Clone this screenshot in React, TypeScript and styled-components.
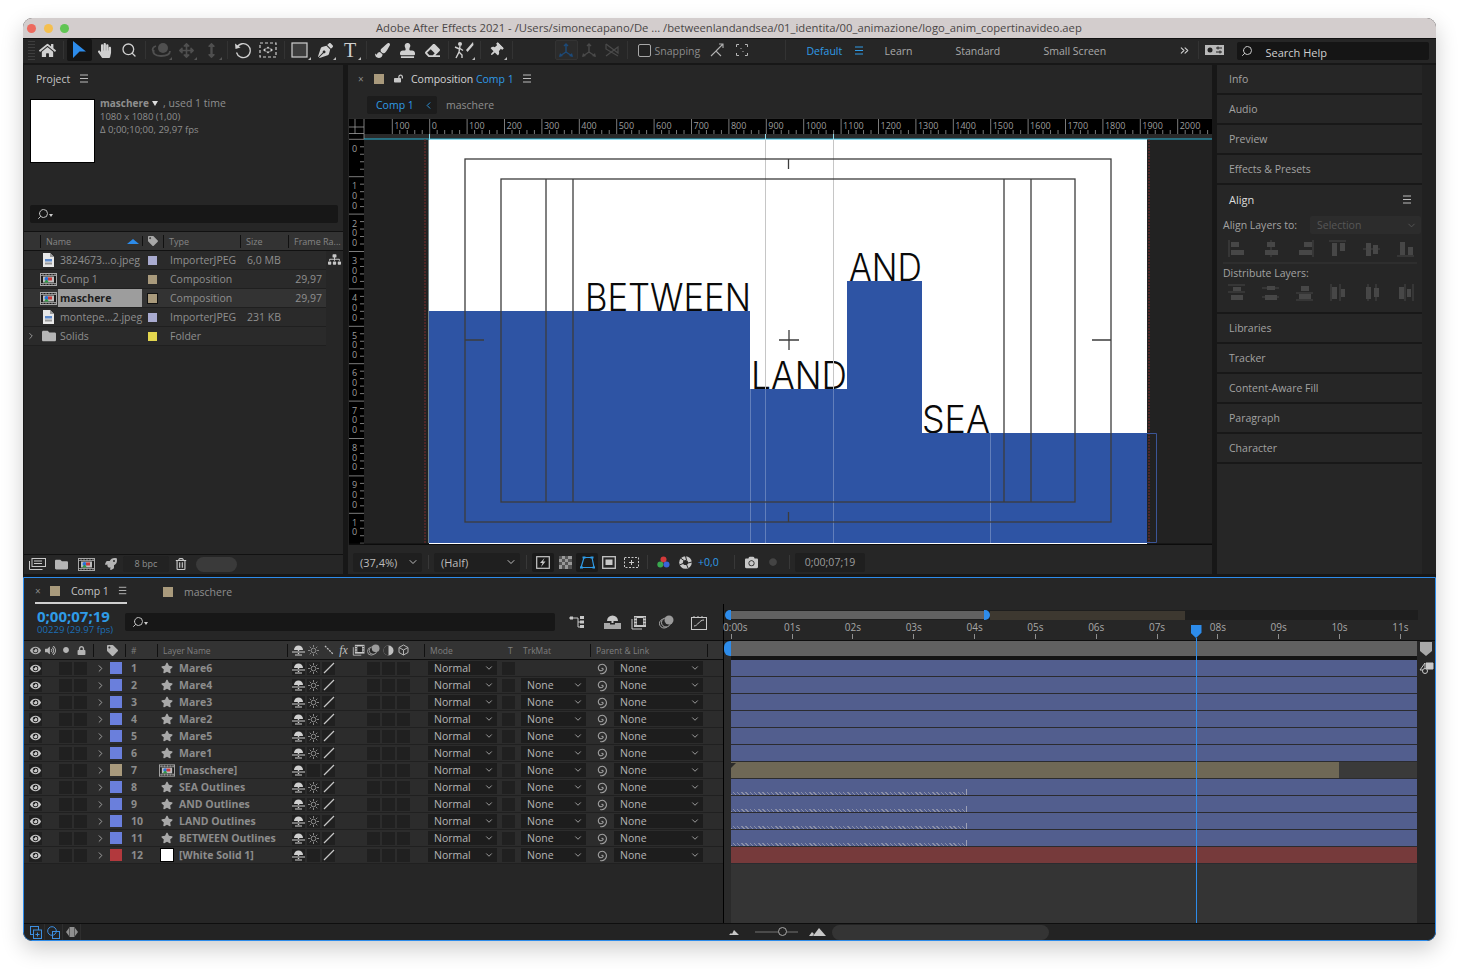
import styled, { createGlobalStyle } from "styled-components";
import { ChevronDown, ChevronRight, ChevronLeft, Search, ChevronsRight } from "lucide-react";
import {
    FaHome, FaHandPaper, FaArrowsAlt, FaPenNib, FaPaintBrush, FaStamp, FaEraser, FaThumbtack,
    FaStar, FaCamera, FaEye, FaLock, FaLockOpen, FaTag, FaVolumeUp, FaFolder, FaSitemap,
    FaRocket, FaRegTrashAlt, FaArrowsAltV, FaCircle,
} from "react-icons/fa";

const FONT = `"Open Sans", "Noto Sans", sans-serif`;

const GlobalStyle = createGlobalStyle`
    html, body { margin: 0; padding: 0; background: #fff; height: 969px; overflow: hidden; }
    * { box-sizing: border-box; }
    #root { font-family: ${FONT}; }
`;

const PROJECT_ROWS = [
    { icon: "file", name: "3824673...o.jpeg", swatch: "#a9abd0", type: "ImporterJPEG", size: "6,0 MB", fps: "" },
    { icon: "comp", name: "Comp 1", swatch: "#a99a7c", type: "Composition", size: "", fps: "29,97" },
    { icon: "comp", name: "maschere", swatch: "#a99a7c", type: "Composition", size: "", fps: "29,97", selected: true },
    { icon: "file", name: "montepe...2.jpeg", swatch: "#a9abd0", type: "ImporterJPEG", size: "231 KB", fps: "" },
    { icon: "folder", name: "Solids", swatch: "#e3d64e", type: "Folder", size: "", fps: "", expand: true },
];

const BLUE = "#6a7fdc";
const TAN = "#a99a7c";
const LAYERS = [
    { n: 1, name: "Mare6", swatch: BLUE, kind: "star", matte: false, hatch: false },
    { n: 2, name: "Mare4", swatch: BLUE, kind: "star", matte: true, hatch: false },
    { n: 3, name: "Mare3", swatch: BLUE, kind: "star", matte: true, hatch: false },
    { n: 4, name: "Mare2", swatch: BLUE, kind: "star", matte: true, hatch: false },
    { n: 5, name: "Mare5", swatch: BLUE, kind: "star", matte: true, hatch: false },
    { n: 6, name: "Mare1", swatch: BLUE, kind: "star", matte: true, hatch: false },
    { n: 7, name: "[maschere]", swatch: TAN, kind: "comp", matte: true, hatch: false },
    { n: 8, name: "SEA Outlines", swatch: BLUE, kind: "star", matte: true, hatch: true },
    { n: 9, name: "AND Outlines", swatch: BLUE, kind: "star", matte: true, hatch: true },
    { n: 10, name: "LAND Outlines", swatch: BLUE, kind: "star", matte: true, hatch: true },
    { n: 11, name: "BETWEEN Outlines", swatch: BLUE, kind: "star", matte: true, hatch: true },
    { n: 12, name: "[White Solid 1]", swatch: "#b2393d", kind: "solid", matte: true, hatch: false },
];

const TIME_LABELS = ["0:00s", "01s", "02s", "03s", "04s", "05s", "06s", "07s", "08s", "09s", "10s", "11s"];
const SIDE_TOP = ["Info", "Audio", "Preview", "Effects & Presets"];
const SIDE_BOTTOM = ["Libraries", "Tracker", "Content-Aware Fill", "Paragraph", "Character"];

/* small drawn icons */

function Burger(props: { color?: string }) {
    return (
        <svg width="10" height="9" viewBox="0 0 10 9" style={{ display: "block" }}>
            <path d="M1 1h8M1 4.5h8M1 8h8" stroke={props.color || "#bbb"} strokeWidth="1" />
        </svg>
    );
}

function CompIcon() {
    return (
        <svg width="17" height="13" viewBox="0 0 17 13" style={{ display: "block" }}>
            <rect x="0.5" y="0.5" width="16" height="12" fill="#1d1d1d" stroke="#a8a8a8" />
            <path d="M1 2.5h15M1 10.5h15M3 1v2M6 1v2M9 1v2M12 1v2M15 1v2M3 10v2M6 10v2M9 10v2M12 10v2M15 10v2" stroke="#a8a8a8" strokeWidth="0.8" />
            <rect x="3" y="3.5" width="11" height="6" fill="#bdbdbd" />
            <circle cx="6.5" cy="6" r="2" fill="#2a6fd8" />
            <rect x="8" y="4.5" width="4" height="3" fill="#c93a3a" />
            <path d="M4 9.5l2.5-3 2.5 3z" fill="#2f9a44" />
        </svg>
    );
}

function FileIcon() {
    return (
        <svg width="11" height="14" viewBox="0 0 11 14" style={{ display: "block" }}>
            <path d="M0 0h7l4 4v10H0z" fill="#e8e8e8" />
            <path d="M7 0v4h4z" fill="#999" />
            <rect x="2" y="6" width="7" height="2.5" fill="#5d89c9" />
            <rect x="2" y="9.5" width="7" height="2" fill="#999" />
        </svg>
    );
}

function Spiral() {
    return (
        <svg width="13" height="13" viewBox="0 0 13 13" style={{ display: "block" }}>
            <path d="M6.5 6.5a1 1 0 0 1 1.6 1a2.5 2.5 0 0 1-4 .5a3.5 3.5 0 0 1 1-5.2a4.5 4.5 0 0 1 5.6 1.4a5.2 5.2 0 0 1-1 6.3a5 5 0 0 1-4.500 1" fill="none" stroke="#a0a0a0" strokeWidth="1.1" />
        </svg>
    );
}

function ShyIcon(props: { color?: string }) {
    return (
        <svg width="13" height="11" viewBox="0 0 13 11" style={{ display: "block" }}>
            <path d="M2 5a4.5 4.5 0 0 1 9 0z" fill={props.color || "#cfcfcf"} />
            <path d="M5.8 2v7h1.4V2zM0 6.5h13v1H0zM3 9.5h7v1H3z" fill={props.color || "#cfcfcf"} />
        </svg>
    );
}

function ShyLarge() {
    return (
        <svg width="17" height="14" viewBox="0 0 17 14" style={{ display: "block" }}>
            <path d="M3 6a5.5 5.5 0 0 1 11 0z" fill="#c8c8c8" />
            <path d="M7.5 3h2v5h-2z" fill="#c8c8c8" />
            <path d="M0 8h6v1.500h5V8h6v6H0z" fill="#a8a8a8" />
        </svg>
    );
}

function SunIcon() {
    return (
        <svg width="11" height="11" viewBox="0 0 11 11" style={{ display: "block" }}>
            <circle cx="5.5" cy="5.5" r="2.3" fill="none" stroke="#8a8a8a" />
            <path d="M5.5 0v2.2M5.5 8.8V11M0 5.5h2.2M8.800 5.5H11M1.7 1.7l1.500 1.500M7.8 7.8l1.500 1.500M9.3 1.7L7.8 3.2M3.2 7.8L1.700 9.300" stroke="#8a8a8a" />
        </svg>
    );
}

function SlashIcon() {
    return (
        <svg width="12" height="12" viewBox="0 0 12 12" style={{ display: "block" }}>
            <path d="M1 11L11 1" stroke="#c6c6c6" strokeWidth="1.2" />
        </svg>
    );
}

function Orbit() {
    return (
        <svg width="22" height="18" viewBox="0 0 22 18">
            <circle cx="13" cy="7" r="5" fill="#4f4f4f" />
            <path d="M4 9c-2 3 1 6 7 6s9-2 9-5M6 5C3 6 2 8 3 10" fill="none" stroke="#4f4f4f" strokeWidth="1.8" />
        </svg>
    );
}

function RotateTool() {
    return (
        <svg width="18" height="18" viewBox="0 0 18 18">
            <path d="M3 6.5a7 7 0 1 1-.5 5" fill="none" stroke="#cfcfcf" strokeWidth="1.3" />
            <path d="M1 2.5l.5 5.500 5-1.500z" fill="#cfcfcf" />
        </svg>
    );
}

function AnchorTool() {
    return (
        <svg width="18" height="16" viewBox="0 0 18 16">
            <rect x="1" y="1" width="16" height="14" fill="none" stroke="#cfcfcf" strokeWidth="1.2" strokeDasharray="3 2" />
            <path d="M4 8l2.5-2v4zM14 8l-2.500-2v4zM9 4.500l-2 2h4zM9 11.500l-2-2h4z" fill="#cfcfcf" />
        </svg>
    );
}

function RectTool() {
    return (
        <svg width="18" height="16" viewBox="0 0 18 16">
            <rect x="1" y="1" width="15" height="14" fill="#3d3d3d" stroke="#cfcfcf" strokeWidth="1.2" />
        </svg>
    );
}

function RotoTool() {
    return (
        <svg width="20" height="18" viewBox="0 0 20 18">
            <circle cx="6" cy="3" r="2" fill="#cfcfcf" />
            <path d="M6 5l-1 6-3 6M5.500 8L1 6M6 7.500l3 2M5 11l3 3v3" fill="none" stroke="#cfcfcf" strokeWidth="1.4" />
            <path d="M19 1l-7 8 1.500 2 6-7z" fill="#cfcfcf" />
        </svg>
    );
}

function AxisIcon(props: { color: string; variant: number }) {
    const c = props.color;
    if (props.variant === 2) {
        return (
            <svg width="16" height="14" viewBox="0 0 16 14">
                <path d="M2 1l12 9V4L2 13M2 1v5l12 7" fill="none" stroke={c} strokeWidth="1.2" />
            </svg>
        );
    }
    return (
        <svg width="16" height="15" viewBox="0 0 16 15">
            <path d="M8 1v8M8 9l-6 4M8 9l6 4M6 3l2-2 2 2" fill="none" stroke={c} strokeWidth="1.4" />
            <path d="M1 14l1-4 3 3zM15 14l-1-4-3 3z" fill={c} />
        </svg>
    );
}

function SnapArrow() {
    return (
        <svg width="14" height="14" viewBox="0 0 14 14">
            <path d="M1 13l5-5 5 5M6 8l7-7M9 1h4v4" fill="none" stroke="#b0b0b0" strokeWidth="1.1" />
        </svg>
    );
}

function FocusIcon() {
    return (
        <svg width="12" height="12" viewBox="0 0 12 12">
            <path d="M0.5 3V0.500H3M9 0.500h2.500V3M11.500 9v2.500H9M3 11.500H0.500V9M4.500 4.500h1M6.500 7.500h1" fill="none" stroke="#b5b5b5" />
        </svg>
    );
}

function WorkspaceIcon() {
    return (
        <svg width="19" height="10" viewBox="0 0 19 10">
            <rect width="19" height="10" fill="#b9b9b9" />
            <circle cx="5" cy="5" r="2.5" fill="#222" />
            <path d="M11 3h6M11 7h6M13 1.500v3M15 5.500v3" stroke="#222" />
        </svg>
    );
}

function FlowIcon() {
    return (
        <svg width="16" height="15" viewBox="0 0 16 15">
            <path d="M0 3h6M6 3h3v9h2M9 7h2" fill="none" stroke="#c8c8c8" />
            <rect x="1" y="1.5" width="3" height="3" fill="#c8c8c8" />
            <rect x="11" y="1" width="4" height="3" fill="#c8c8c8" />
            <rect x="11" y="5.5" width="4" height="3" fill="#c8c8c8" />
            <rect x="11" y="10" width="4" height="3" fill="#c8c8c8" />
        </svg>
    );
}

function FramesIcon() {
    return (
        <svg width="15" height="15" viewBox="0 0 15 15">
            <rect x="3" y="1" width="12" height="11" fill="#c8c8c8" />
            <path d="M1 4v10h10" fill="none" stroke="#c8c8c8" />
            <rect x="6" y="3" width="6" height="7" fill="#262626" />
            <path d="M3.5 3h2M3.500 6h2M3.500 9h2M12.500 3h2M12.500 6h2M12.500 9h2" stroke="#262626" />
        </svg>
    );
}

function BlendIcon() {
    return (
        <svg width="15" height="14" viewBox="0 0 15 14">
            <circle cx="5" cy="8.5" r="4.5" fill="none" stroke="#aaa" />
            <circle cx="7" cy="7.5" r="4.5" fill="#262626" stroke="#aaa" />
            <circle cx="10" cy="5" r="4.5" fill="#9b9b9b" />
        </svg>
    );
}

function GraphIcon() {
    return (
        <svg width="16" height="15" viewBox="0 0 16 15">
            <rect x="0.5" y="2.5" width="15" height="12" fill="none" stroke="#c8c8c8" />
            <path d="M3 11c4 0 5-6 10-6M3 1v2M7 1v2M11 1v2" fill="none" stroke="#c8c8c8" />
        </svg>
    );
}

function MaskIcon() {
    return (
        <svg width="15" height="13" viewBox="0 0 15 13">
            <path d="M4 1.500h8l2 10H1z" fill="none" stroke="#2f9be6" strokeWidth="1.2" />
            <path d="M2.500 0.500h3v2h-3zM10.500 0.500h3v2h-3zM0 10.500h3v2H0zM12.500 10.500h2.500v2h-2.500z" fill="#2f9be6" />
        </svg>
    );
}

function CheckerIcon() {
    return (
        <svg width="13" height="13" viewBox="0 0 13 13">
            <rect width="13" height="13" fill="#999" />
            <path d="M0 0h3v3H0zM6 0h3v3H6zM3 3h3v3H3zM9 3h4v3H9zM0 6h3v3H0zM6 6h3v3H6zM3 9h3v4H3zM9 9h4v4H9z" fill="#555" />
        </svg>
    );
}

function RegionIcon() {
    return (
        <svg width="14" height="13" viewBox="0 0 14 13">
            <rect x="0.7" y="0.7" width="12.6" height="11.6" fill="none" stroke="#c8c8c8" strokeWidth="1.3" />
            <rect x="3.5" y="3.5" width="7" height="5.5" fill="#c8c8c8" />
        </svg>
    );
}

function GuideIcon() {
    return (
        <svg width="15" height="13" viewBox="0 0 15 13">
            <rect x="0.5" y="1.5" width="14" height="10" fill="none" stroke="#c8c8c8" strokeDasharray="2 1.5" />
            <path d="M7.500 4v5M5 6.500h5" stroke="#c8c8c8" />
        </svg>
    );
}

function PreviewIcon() {
    return (
        <svg width="14" height="13" viewBox="0 0 14 13">
            <rect x="0.7" y="0.7" width="12.6" height="11.6" fill="none" stroke="#c8c8c8" strokeWidth="1.2" />
            <path d="M8.500 2L4 7h2.500L5 11l4.500-5.500H7z" fill="#c8c8c8" />
        </svg>
    );
}

function RgbIcon() {
    return (
        <svg width="13" height="13" viewBox="0 0 13 13">
            <circle cx="6.5" cy="3.5" r="3" fill="#d43a3a" />
            <circle cx="3.3" cy="8.5" r="3" fill="#3aa84f" />
            <circle cx="9.5" cy="8.5" r="3" fill="#3a64d8" />
        </svg>
    );
}

function ShutterIcon() {
    return (
        <svg width="13" height="13" viewBox="0 0 13 13">
            <circle cx="6.5" cy="6.5" r="6.3" fill="#c8c8c8" />
            <circle cx="6.5" cy="6.5" r="2.6" fill="#262626" />
            <path d="M6.500 0l1 4M13 6l-4 1M9 12L7.500 8.500M0.500 9l3.500-1.500M1.500 2L5 4.500" stroke="#262626" />
        </svg>
    );
}

function NewComp() {
    return (
        <svg width="12" height="13" viewBox="0 0 12 13">
            <rect x="0.5" y="0.5" width="8" height="8" fill="none" stroke="#3d8fe0" />
            <rect x="3.5" y="4" width="8" height="8.5" fill="#262626" stroke="#3d8fe0" />
            <path d="M7.500 6.500v4M5.500 8.500h4" stroke="#3d8fe0" />
        </svg>
    );
}

function NewBlend() {
    return (
        <svg width="13" height="13" viewBox="0 0 13 13">
            <circle cx="5" cy="5" r="4.3" fill="none" stroke="#3d8fe0" />
            <rect x="5.5" y="5.5" width="7" height="7" fill="none" stroke="#3d8fe0" />
        </svg>
    );
}

function FrameBlend() {
    return (
        <svg width="12" height="12" viewBox="0 0 12 12">
            <path d="M0 6l3-4v8zM12 6L9 2v8z" fill="#8f8f8f" />
            <rect x="3.5" y="1" width="5" height="10" fill="#8f8f8f" />
        </svg>
    );
}

function Mountain(props: { big?: boolean }) {
    return props.big ? (
        <svg width="17" height="8" viewBox="0 0 17 8">
            <path d="M0 8l3-4 2 2-1.500 2zM4 8l6-8 7 8z" fill="#c8c8c8" />
        </svg>
    ) : (
        <svg width="10" height="5" viewBox="0 0 10 5">
            <path d="M0 5l2-2 1 1 2-4 5 5z" fill="#c8c8c8" />
        </svg>
    );
}

type AlignSpec = { line: string; bars: number[][] };

const ALIGN_ICONS: AlignSpec[] = [
    { line: "M1 0v17", bars: [[3, 2, 8, 5], [3, 10, 13, 5]] },
    { line: "M9 0v17", bars: [[5, 2, 8, 5], [3, 10, 13, 5]] },
    { line: "M17 0v17", bars: [[8, 2, 8, 5], [3, 10, 13, 5]] },
    { line: "M0 1h17", bars: [[3, 3, 5, 13], [11, 3, 5, 8]] },
    { line: "M0 9h17", bars: [[3, 3, 5, 13], [10, 5, 5, 9]] },
    { line: "M0 16h17", bars: [[3, 2, 5, 13], [11, 7, 5, 8]] },
];

const DIST_ICONS: AlignSpec[] = [
    { line: "M0 1h17M0 8h17", bars: [[5, 3, 8, 4], [3, 11, 12, 5]] },
    { line: "M0 4h17M0 13h17", bars: [[5, 2, 8, 4], [3, 11, 12, 5]] },
    { line: "M0 9h17M0 16h17", bars: [[5, 2, 8, 5], [3, 10, 12, 5]] },
    { line: "M2 0v17M11 0v17", bars: [[3, 3, 5, 12], [12, 5, 4, 8]] },
    { line: "M5 0v17M13 0v17", bars: [[3, 3, 5, 12], [11, 4, 5, 9]] },
    { line: "M8 0v17M16 0v17", bars: [[2, 3, 5, 12], [10, 5, 4, 8]] },
];

function AlignGlyph(props: { spec: AlignSpec }) {
    return (
        <svg width="18" height="17" viewBox="0 0 18 17">
            {props.spec.bars.map((b, i) => <rect key={i} x={b[0]} y={b[1]} width={b[2]} height={b[3]} fill="#474747" />)}
            <path d={props.spec.line} stroke="#474747" fill="none" />
        </svg>
    );
}

/* composition viewer: rulers and artwork, drawn in page coordinates */

function Viewer() {
    const origin = 429.7;
    const top = 139.3;
    const step = 37.4;
    const hMajors = Array.from({ length: 22 }, (_, i) => i - 1);
    const vMajors = Array.from({ length: 11 }, (_, i) => i);
    return (
        <ViewerSvg viewBox="348 118 864 427" width="864" height="427">
            <rect x="348" y="118" width="864" height="427" fill="#222" />
            <rect x="348" y="118" width="864" height="21" fill="#2a2a2a" />
            <rect x="349" y="119" width="863" height="15" fill="#000" />
            <rect x="349" y="119" width="15" height="426" fill="#000" />
            {hMajors.map((k) => {
                const x = origin + k * step;
                return (
                    <g key={k}>
                        <path d={`M${x} 119v15`} stroke="#9a9a9a" strokeWidth="0.8" />
                        {[1, 2, 3, 4].map((m) => (
                            <path key={m} d={`M${x + m * 7.48} 130v4`} stroke="#9a9a9a" strokeWidth="0.8" />
                        ))}
                        <text x={x + 2} y={129} fontSize="9" fill="#9d9d9d" fontFamily={FONT}>
                            {k === -1 ? "100" : String(k * 100)}
                        </text>
                    </g>
                );
            })}
            <rect x="349" y="119" width="15" height="20" fill="#000" />
            <path d="M349 127h15M349 133.5h15M355 119v15M364 119v20" stroke="#9a9a9a" strokeWidth="0.8" />
            {vMajors.map((k) => {
                const y = top + k * step;
                const label = k === 10 ? "10" : String(k * 100);
                return (
                    <g key={k}>
                        <path d={`M349 ${y}h15`} stroke="#9a9a9a" strokeWidth="0.8" />
                        {[1, 2, 3, 4].map((m) => (
                            <path key={m} d={`M360 ${y + m * 7.48}h4`} stroke="#9a9a9a" strokeWidth="0.8" />
                        ))}
                        <RulerDigits x={354.5} y={y + 2.5}>{label}</RulerDigits>
                    </g>
                );
            })}
            <rect x="349" y="543.5" width="863" height="1.5" fill="#0c0c0c" />

            <path d="M429 139.5V543" stroke="#bfe8f2" strokeWidth="1" />
            <rect x="429" y="139" width="718" height="405" fill="#fff" />
            <path d="M364 139h848" stroke="#29b6d8" strokeWidth="1" />
            <path d="M429.5 134v5M765.5 134v5M833.5 134v5" stroke="#8fdcec" strokeWidth="1" />
            <path d="M425 139v405M1149 139v405" stroke="#7a2c2c" strokeWidth="1" strokeDasharray="2 1" />

            <ArtText x="585" y="311" textLength="166" lengthAdjust="spacingAndGlyphs" fontSize="38">BETWEEN</ArtText>
            <ArtText x="849" y="281" textLength="73" lengthAdjust="spacingAndGlyphs" fontSize="38">AND</ArtText>
            <ArtText x="751" y="389" textLength="96" lengthAdjust="spacingAndGlyphs" fontSize="38">LAND</ArtText>
            <ArtText x="922" y="433" textLength="68" lengthAdjust="spacingAndGlyphs" fontSize="38">SEA</ArtText>

            <path d="M765.5 139V543M833.5 139V543" stroke="#c6c6c6" strokeWidth="1" />
            <path d="M429 311H750V389H847V281H922V433H1147V543H429Z" fill="#2e54a4" />
            <path d="M750.5 311V543M765.5 389V543M833.5 389V543M990.5 433V543" stroke="#fff" strokeOpacity="0.25" strokeWidth="1" />
            <path d="M1147 433.5H1156.5V542.5H1147" fill="none" stroke="#3b5596" strokeWidth="1" />

            <g fill="none" stroke="#3c3c3c" strokeWidth="1.3">
                <rect x="465" y="159" width="646" height="363" />
                <rect x="501" y="179" width="574" height="323" />
                <path d="M546 179V502M573 179V502M1004 179V502M1031 179V502" />
                <path d="M788.5 159V169M788.5 512V522M465 340H484M1092 340H1111" />
                <path d="M789 330V350M779 340H799" />
            </g>
        </ViewerSvg>
    );
}

/* panels */

function ProjectPanel() {
    return (
        <Project>
            <PanelTitleRow>
                <PanelTitle>Project</PanelTitle>
                <Burger />
            </PanelTitleRow>
            <ProjectInfo>
                <Thumb />
                <ThumbMeta>
                    <MetaStrong>maschere <Caret /> <MetaUsed>, used 1 time</MetaUsed></MetaStrong>
                    <MetaLine>1080 x 1080 (1,00)</MetaLine>
                    <MetaLine>Δ 0;00;10;00, 29,97 fps</MetaLine>
                </ThumbMeta>
            </ProjectInfo>
            <ProjectSearch>
                <SearchGlass><Search size={12} color="#c0c0c0" /></SearchGlass>
                <MiniCaret />
            </ProjectSearch>
            <FileHeader>
                <FileHeadName>Name<SortArrow /></FileHeadName>
                <FileHeadTag><FaTag size={10} color="#a8a8a8" /></FileHeadTag>
                <FileHeadCell $w={77}>Type</FileHeadCell>
                <FileHeadCell $w={48}>Size</FileHeadCell>
                <FileHeadCell $w={55}>Frame Ra...</FileHeadCell>
            </FileHeader>
            <FileArea>
                <FileList>
                    {PROJECT_ROWS.map((row) => (
                        <FileRow key={row.name} $selected={!!row.selected}>
                            <FileIconCell>
                                {row.expand && <ExpandMark><ChevronRight size={10} color="#aaa" /></ExpandMark>}
                                {row.icon === "file" && <FileIcon />}
                                {row.icon === "comp" && <CompIcon />}
                                {row.icon === "folder" && <FaFolder size={14} color="#b5b5b5" />}
                            </FileIconCell>
                            <FileName $selected={!!row.selected}>{row.name}</FileName>
                            <FileSwatchCell><Swatch9 $color={row.swatch} $selected={!!row.selected} /></FileSwatchCell>
                            <FileText>{row.type}</FileText>
                            <FileText>{row.size}</FileText>
                            <FileFps>{row.fps}</FileFps>
                        </FileRow>
                    ))}
                </FileList>
                <FileSide><FaSitemap size={13} color="#c8c8c8" /></FileSide>
            </FileArea>
            <ProjectFooter>
                <FooterIcon $w={24}><svg width="17" height="12" viewBox="0 0 17 12"><rect x="3" y="0.5" width="13.5" height="8" fill="none" stroke="#c8c8c8" /><path d="M5 3h8M5 5.500h8M0.500 3v8.500h13" fill="none" stroke="#c8c8c8" /></svg></FooterIcon>
                <FooterIcon $w={25}><FaFolder size={13} color="#b5b5b5" /></FooterIcon>
                <FooterIcon $w={24}><CompIcon /></FooterIcon>
                <FooterIcon $w={25}><FaRocket size={12} color="#b5b5b5" /></FooterIcon>
                <BpcBox>8 bpc</BpcBox>
                <FooterIcon $w={24}><FaRegTrashAlt size={12} color="#c8c8c8" /></FooterIcon>
                <FooterPill />
            </ProjectFooter>
        </Project>
    );
}

function CompPanel() {
    return (
        <Comp>
            <CompTabRow>
                <TabClose>×</TabClose>
                <TabSwatch />
                <LockMark><FaLockOpen size={9} color="#c8c8c8" /></LockMark>
                <CompTabTitle>Composition <BlueText>Comp 1</BlueText></CompTabTitle>
                <Burger />
            </CompTabRow>
            <FlowRow>
                <FlowActive>
                    <BlueText>Comp 1</BlueText>
                    <ChevronLeft size={11} color="#2f9be6" />
                </FlowActive>
                <FlowName>maschere</FlowName>
            </FlowRow>
            <Viewer />
            <ViewerBar>
                <ViewerSelect $w={69}>(37,4%)<ChevronDown size={12} /></ViewerSelect>
                <BarSep />
                <ViewerSelect $w={86}>(Half)<ChevronDown size={12} /></ViewerSelect>
                <BarSep />
                <ViewerBtn $active><PreviewIcon /></ViewerBtn>
                <ViewerBtn><CheckerIcon /></ViewerBtn>
                <ViewerBtn $active><MaskIcon /></ViewerBtn>
                <ViewerBtn><RegionIcon /></ViewerBtn>
                <ViewerBtn><GuideIcon /></ViewerBtn>
                <NarrowSep />
                <ViewerBtn><RgbIcon /></ViewerBtn>
                <ViewerBtn><ShutterIcon /></ViewerBtn>
                <Exposure>+0,0</Exposure>
                <BarSep />
                <ViewerBtn><FaCamera size={13} color="#c8c8c8" /></ViewerBtn>
                <ViewerBtn><FaCircle size={8} color="#444" /></ViewerBtn>
                <NarrowSep />
                <TimeBox>0;00;07;19</TimeBox>
            </ViewerBar>
        </Comp>
    );
}

function SidePanel() {
    return (
        <Side>
            <SideList>
                {SIDE_TOP.map((t) => <SideItem key={t}>{t}</SideItem>)}
                <AlignBlock>
                    <AlignHead>
                        <AlignTitle>Align</AlignTitle>
                        <Burger />
                    </AlignHead>
                    <AlignToRow>
                        <AlignLabel>Align Layers to:</AlignLabel>
                        <AlignSelect>Selection<ChevronDown size={11} /></AlignSelect>
                    </AlignToRow>
                    <AlignIcons $h={22}>
                        {ALIGN_ICONS.map((s, i) => <AlignGlyph key={i} spec={s} />)}
                    </AlignIcons>
                    <AlignDivider />
                    <DistLabel>Distribute Layers:</DistLabel>
                    <AlignIcons $h={18}>
                        {DIST_ICONS.map((s, i) => <AlignGlyph key={i} spec={s} />)}
                    </AlignIcons>
                </AlignBlock>
                {SIDE_BOTTOM.map((t) => <SideItem key={t}>{t}</SideItem>)}
            </SideList>
            <SideStrip />
        </Side>
    );
}

function LayerRowItem(props: { layer: typeof LAYERS[number] }) {
    const l = props.layer;
    return (
        <LayerRow>
            <EyeBox><FaEye size={11} color="#c8c8c8" /></EyeBox>
            <AudioGroup><Cell /><Cell /></AudioGroup>
            <TwirlCell><ChevronRight size={11} color="#aaa" /></TwirlCell>
            <LayerSwatch $color={l.swatch} />
            <LayerNum>{l.n}</LayerNum>
            <LayerIconCell>
                {l.kind === "star" && <FaStar size={12} color="#a8a8a8" />}
                {l.kind === "comp" && <CompIcon />}
                {l.kind === "solid" && <SolidChip />}
            </LayerIconCell>
            <LayerName>{l.name}</LayerName>
            <SwitchGroup>
                <Cell><ShyIcon /></Cell>
                <Cell>{l.kind === "star" && <SunIcon />}</Cell>
                <Cell><SlashIcon /></Cell>
            </SwitchGroup>
            <ExtraGroup><Cell /><Cell /><Cell /></ExtraGroup>
            <ModeSelect>Normal<ChevronDown size={10} color="#b5b5b5" /></ModeSelect>
            <PreserveCell />
            {l.matte ? <MatteSelect>None<ChevronDown size={10} color="#b5b5b5" /></MatteSelect> : <MatteEmpty />}
            <SpiralCell><Spiral /></SpiralCell>
            <ParentSelect>None<ChevronDown size={10} color="#b5b5b5" /></ParentSelect>
        </LayerRow>
    );
}

function TimelinePanel() {
    return (
        <Timeline>
            <TimelineTabs>
                <ActiveTab>
                    <TimelineClose>×</TimelineClose>
                    <TabSwatch />
                    <TimelineTabName>Comp 1</TimelineTabName>
                    <Burger />
                </ActiveTab>
                <IdleTab>
                    <TabSwatch />
                    <TimelineIdleName>maschere</TimelineIdleName>
                </IdleTab>
            </TimelineTabs>
            <TimelineBody>
                <LayerColumn>
                    <TimeRow>
                        <TimeBlock>
                            <CurrentTime>0;00;07;19</CurrentTime>
                            <FrameCount>00229 (29.97 fps)</FrameCount>
                        </TimeBlock>
                        <TimeSearch>
                            <SearchGlass><Search size={12} color="#c0c0c0" /></SearchGlass>
                            <MiniCaret />
                        </TimeSearch>
                        <TimeTools>
                            <TimeTool $w={44}><FlowIcon /></TimeTool>
                            <TimeTool $w={26}><ShyLarge /></TimeTool>
                            <TimeTool $w={26}><FramesIcon /></TimeTool>
                            <TimeTool $w={30}><BlendIcon /></TimeTool>
                            <TimeTool $w={36}><GraphIcon /></TimeTool>
                        </TimeTools>
                    </TimeRow>
                    <ColumnHeader>
                        <HeadIcons>
                            <FaEye size={11} color="#b5b5b5" />
                            <FaVolumeUp size={11} color="#b5b5b5" />
                            <FaCircle size={6} color="#b5b5b5" />
                            <FaLock size={9} color="#b5b5b5" />
                        </HeadIcons>
                        <HeadTag><FaTag size={11} color="#b5b5b5" /></HeadTag>
                        <HeadNum>#</HeadNum>
                        <HeadLayerName>Layer Name</HeadLayerName>
                        <HeadSwitches>
                            <ShyIcon />
                            <SunIcon />
                            <svg width="10" height="10" viewBox="0 0 10 10"><path d="M1 1l8 8" stroke="#c0c0c0" strokeWidth="1.3" strokeDasharray="2 1" /></svg>
                            <FxMark>fx</FxMark>
                            <FramesIcon />
                            <BlendIcon />
                            <svg width="11" height="11" viewBox="0 0 11 11"><circle cx="5.5" cy="5.5" r="5" fill="#c0c0c0" /><path d="M5.500 0.500a5 5 0 0 0 0 10z" fill="#333" /></svg>
                            <svg width="11" height="12" viewBox="0 0 11 12"><path d="M5.500 1l4.500 2.500v5L5.500 11 1 8.500v-5zM5.500 6v5M1 3.500L5.500 6 10 3.500" fill="none" stroke="#b5b5b5" /></svg>
                        </HeadSwitches>
                        <HeadMode>Mode</HeadMode>
                        <HeadT>T</HeadT>
                        <HeadTrk>TrkMat</HeadTrk>
                        <HeadParent>Parent &amp; Link</HeadParent>
                    </ColumnHeader>
                    <LayerList>
                        {LAYERS.map((l) => <LayerRowItem key={l.n} layer={l} />)}
                    </LayerList>
                </LayerColumn>
                <TrackColumn>
                    <TimeRuler>
                        <NavBar>
                            <NavStart />
                            <NavRange />
                            <NavEnd />
                            <NavRest />
                        </NavBar>
                        {TIME_LABELS.map((t, i) => (
                            <TimeMark key={t} style={{ left: 7.3 + i * 60.82 }}>
                                <TimeLabel $first={i === 0}>{t}</TimeLabel>
                                <TimeTick />
                            </TimeMark>
                        ))}
                    </TimeRuler>
                    <TrackMain>
                        <TrackGutter>
                            <WorkHandle />
                        </TrackGutter>
                        <TrackStack>
                            <WorkBar />
                            <Tracks>
                                {LAYERS.map((l) => (
                                    <TrackBar key={l.n} $kind={l.kind}>
                                        {l.kind === "comp" && <><CompBar /><CompCorner /></>}
                                        {l.hatch && <Hatch />}
                                    </TrackBar>
                                ))}
                            </Tracks>
                        </TrackStack>
                        <TrackStrip>
                            <WorkMarker />
                            <svg width="15" height="14" viewBox="0 0 15 14"><path d="M1 10L6 3v7zM7 3h7v6H8" fill="none" stroke="#c8c8c8" /><path d="M7 3h7v6H7z" fill="#c8c8c8" /><circle cx="6" cy="11" r="2.5" fill="#262626" stroke="#c8c8c8" /></svg>
                        </TrackStrip>
                    </TrackMain>
                    <PlayHead style={{ left: 1196 - 724 }}>
                        <PlayCap />
                        <PlayLine />
                    </PlayHead>
                </TrackColumn>
            </TimelineBody>
            <TimelineFooter>
                <FootLeft>
                    <FootIcon><NewComp /></FootIcon>
                    <FootIcon><NewBlend /></FootIcon>
                    <FootIcon><FrameBlend /></FootIcon>
                </FootLeft>
                <ZoomControls>
                    <Mountain />
                    <ZoomSlider><ZoomKnob /></ZoomSlider>
                    <Mountain big />
                </ZoomControls>
                <FootPill />
            </TimelineFooter>
        </Timeline>
    );
}

function App() {
    return (
        <>
            <GlobalStyle />
            <Page>
                <Window>
                    <TitleBar>
                        <Lights>
                            <Light $color="#ed6a5e" />
                            <Light $color="#f4bf4f" />
                            <Light $color="#61c554" />
                        </Lights>
                        <TitleText>Adobe After Effects 2021 - /Users/simonecapano/De ... /betweenlandandsea/01_identita/00_animazione/logo_anim_copertinavideo.aep</TitleText>
                    </TitleBar>
                    <Toolbar>
                        <Grip />
                        <Tool><FaHome size={17} color="#d0d0d0" /></Tool>
                        <ToolSep />
                        <Tool $active>
                            <svg width="14" height="18" viewBox="0 0 14 18"><path d="M1 0l13 10.500H7.500L1 17z" fill="#2d8ceb" /></svg>
                        </Tool>
                        <Tool><FaHandPaper size={15} color="#d0d0d0" /></Tool>
                        <Tool><Search size={16} color="#d0d0d0" /></Tool>
                        <ToolSep />
                        <Tool $corner $off><Orbit /></Tool>
                        <Tool $corner $off><FaArrowsAlt size={15} color="#4f4f4f" /></Tool>
                        <Tool $corner $off><FaArrowsAltV size={15} color="#4f4f4f" /></Tool>
                        <ToolSep />
                        <Tool><RotateTool /></Tool>
                        <Tool><AnchorTool /></Tool>
                        <ToolSep />
                        <Tool $corner><RectTool /></Tool>
                        <Tool $corner><FaPenNib size={15} color="#d0d0d0" /></Tool>
                        <Tool $corner><ToolLetter>T</ToolLetter></Tool>
                        <ToolSep />
                        <Tool><FaPaintBrush size={15} color="#d0d0d0" /></Tool>
                        <Tool><FaStamp size={15} color="#d0d0d0" /></Tool>
                        <Tool><FaEraser size={15} color="#d0d0d0" /></Tool>
                        <ToolSep />
                        <Tool $corner><RotoTool /></Tool>
                        <ToolSep />
                        <Tool $corner><PinTilt><FaThumbtack size={14} color="#d0d0d0" /></PinTilt></Tool>
                        <ToolSep />
                        <AxisGroup>
                            <AxisBtn $active><AxisIcon color="#1d4a78" variant={1} /></AxisBtn>
                            <AxisBtn><AxisIcon color="#4a4a4a" variant={1} /></AxisBtn>
                            <AxisBtn><AxisIcon color="#4a4a4a" variant={2} /></AxisBtn>
                        </AxisGroup>
                        <ToolSep />
                        <SnapBox />
                        <SnapLabel>Snapping</SnapLabel>
                        <SnapTool><SnapArrow /></SnapTool>
                        <SnapTool><FocusIcon /></SnapTool>
                        <WorkspaceSep />
                        <WorkspaceActive>Default</WorkspaceActive>
                        <WorkspaceMenu><Burger color="#2f9be6" /></WorkspaceMenu>
                        <WorkspaceTab $w={71}>Learn</WorkspaceTab>
                        <WorkspaceTab $w={88}>Standard</WorkspaceTab>
                        <WorkspaceTab $w={63}>Small Screen</WorkspaceTab>
                        <WorkspaceMore><ChevronsRight size={13} color="#cfcfcf" /></WorkspaceMore>
                        <ToolSep />
                        <WorkspaceGear><WorkspaceIcon /></WorkspaceGear>
                        <HelpSearch>
                            <SearchGlass><Search size={12} color="#c8c8c8" /></SearchGlass>
                            <HelpText>Search Help</HelpText>
                        </HelpSearch>
                    </Toolbar>
                    <Main>
                        <ProjectPanel />
                        <CompPanel />
                        <SidePanel />
                    </Main>
                    <TimelinePanel />
                </Window>
            </Page>
        </>
    );
}

const Page = styled.div`
    padding: 18px 23px;
    width: 1459px;
    height: 969px;
`;

const Window = styled.div`
    width: 1413px;
    height: 923px;
    border-radius: 9px;
    overflow: hidden;
    background: #171717;
    box-shadow: 0 8px 22px rgba(0,0,0,0.2);
    display: flex;
    flex-direction: column;
`;

const TitleBar = styled.div`
    height: 21px;
    flex: none;
    background: #d3cdcd;
    border-bottom: 1px solid #111;
    display: flex;
    align-items: center;
    position: relative;
`;

const Lights = styled.div`
    display: flex;
    gap: 7.5px;
    padding-left: 4px;
    flex: none;
`;

const Light = styled.div<{ $color: string }>`
    width: 9px;
    height: 9px;
    border-radius: 50%;
    background: ${(p) => p.$color};
`;

const TitleText = styled.div`
    margin-left: 307px;
    padding-bottom: 2px;
    font-size: 11.25px;
    color: #4a4646;
    white-space: nowrap;
`;

const Toolbar = styled.div`
    height: 24px;
    flex: none;
    margin-bottom: 2px;
    background: #262626;
    display: flex;
    align-items: center;
    padding: 0 0 2px 5px;
    position: relative;
`;

const Grip = styled.div`
    width: 6.5px;
    height: 19px;
    flex: none;
    background: repeating-linear-gradient(0deg, #3e3e3e 0 1px, transparent 1px 3px);
`;

const Tool = styled.div<{ $active?: boolean; $corner?: boolean; $off?: boolean }>`
    width: 25px;
    height: 22px;
    flex: none;
    display: flex;
    align-items: center;
    justify-content: center;
    position: relative;
    border-radius: 2px;
    background: ${(p) => (p.$active ? "#141414" : "transparent")};
    &::after {
        content: "";
        display: ${(p) => (p.$corner ? "block" : "none")};
        position: absolute;
        right: 2px;
        bottom: 1px;
        border-style: solid;
        border-width: 0 0 3px 3px;
        border-color: transparent transparent ${(p) => (p.$off ? "#555" : "#bbb")} transparent;
    }
`;

const ToolSep = styled.div`
    width: 7px;
    height: 18px;
    flex: none;
    display: flex;
    justify-content: center;
    &::before {
        content: "";
        width: 1px;
        background: #333;
    }
`;

const PinTilt = styled.span`
    display: flex;
    transform: rotate(45deg);
`;

const ToolLetter = styled.span`
    font-family: "Liberation Serif", serif;
    font-size: 20px;
    color: #d0d0d0;
    line-height: 1;
`;

const AxisGroup = styled.div`
    display: flex;
    margin-left: 39px;
    flex: none;
`;

const AxisBtn = styled.div<{ $active?: boolean }>`
    width: 23px;
    height: 20px;
    display: flex;
    align-items: center;
    justify-content: center;
    border-radius: 2px;
    background: ${(p) => (p.$active ? "#2b2b2b" : "transparent")};
    border: 1px solid ${(p) => (p.$active ? "#333" : "transparent")};
`;

const SnapBox = styled.div`
    width: 13px;
    height: 13px;
    flex: none;
    border: 1.5px solid #a8a8a8;
    border-radius: 2px;
    background: #222;
    margin-left: 7px;
`;

const SnapLabel = styled.span`
    font-size: 10.5px;
    color: #8c8c8c;
    margin-left: 4px;
    padding-top: 2px;
    width: 50px;
    flex: none;
`;

const SnapTool = styled.div`
    width: 25px;
    flex: none;
    display: flex;
    align-items: center;
    justify-content: center;
`;

const WorkspaceSep = styled.div`
    width: 1px;
    height: 20px;
    background: #333;
    margin-left: 30px;
    margin-right: 21px;
    flex: none;
`;

const WorkspaceActive = styled.span`
    font-size: 10.5px;
    color: #2f9be6;
    padding-top: 2px;
    width: 47px;
    flex: none;
`;

const WorkspaceMenu = styled.div`
    width: 31px;
    flex: none;
`;

const WorkspaceTab = styled.span<{ $w: number }>`
    font-size: 10.5px;
    color: #a9a9a9;
    padding-top: 2px;
    width: ${(p) => p.$w}px;
    white-space: nowrap;
    flex: none;
`;

const WorkspaceMore = styled.div`
    margin-left: 68px;
    width: 20px;
    flex: none;
    display: flex;
    justify-content: center;
`;

const WorkspaceGear = styled.div`
    width: 26px;
    flex: none;
    display: flex;
    justify-content: center;
`;

const HelpSearch = styled.div`
    width: 192px;
    height: 18px;
    margin: 2px 0 0 9px;
    flex: none;
    background: #151515;
    border-radius: 2px;
    display: flex;
    align-items: center;
    padding-left: 4px;
`;

const SearchGlass = styled.span`
    display: flex;
    transform: scaleX(-1);
`;

const HelpText = styled.span`
    margin-left: 13px;
    font-size: 11px;
    color: #cfcfcf;
    padding-top: 2px;
`;

const Main = styled.div`
    height: 509px;
    flex: none;
    display: flex;
    padding-left: 1px;
    gap: 5px;
`;

const Panel = styled.div`
    background: #262626;
    display: flex;
    flex-direction: column;
    height: 100%;
`;

const Project = styled(Panel)`
    width: 319px;
    flex: none;
`;

const PanelTitleRow = styled.div`
    height: 27px;
    flex: none;
    display: flex;
    align-items: center;
    gap: 9px;
    padding-left: 12px;
`;

const PanelTitle = styled.span`
    font-size: 10.5px;
    color: #c4c4c4;
`;

const ProjectInfo = styled.div`
    height: 113px;
    flex: none;
    display: flex;
    align-items: flex-start;
    padding: 7px 0 0 6px;
    gap: 5px;
`;

const Thumb = styled.div`
    width: 65px;
    height: 64px;
    background: #fff;
    border: 1px solid #000;
`;

const ThumbMeta = styled.div`
    display: flex;
    flex-direction: column;
    line-height: 13px;
    margin-top: -2px;
`;

const MetaLine = styled.div`
    font-size: 9.5px;
    color: #8f8f8f;
`;

const MetaStrong = styled.div`
    font-size: 10px;
    font-weight: 700;
    color: #8f8f8f;
    white-space: nowrap;
`;

const MetaUsed = styled.span`
    font-size: 10.5px;
    font-weight: 400;
    margin-left: 3px;
`;

const Caret = styled.span`
    display: inline-block;
    width: 0;
    height: 0;
    border-left: 3.5px solid transparent;
    border-right: 3.5px solid transparent;
    border-top: 5px solid #ddd;
    vertical-align: 1px;
`;

const MiniCaret = styled.span`
    width: 0;
    height: 0;
    margin-top: 3px;
    border-left: 2.5px solid transparent;
    border-right: 2.5px solid transparent;
    border-top: 3px solid #ccc;
`;

const ProjectSearch = styled.div`
    height: 18px;
    margin: 0 5px 8px 6px;
    flex: none;
    background: #171717;
    border-radius: 2px;
    display: flex;
    align-items: center;
    padding-left: 7px;
`;

const FileHeader = styled.div`
    height: 20px;
    flex: none;
    background: #333;
    border-top: 1px solid #111;
    border-bottom: 1px solid #111;
    display: flex;
    align-items: center;
    padding-left: 16px;
`;

const FileHeadCell = styled.div<{ $w: number }>`
    width: ${(p) => p.$w}px;
    flex: none;
    font-size: 9px;
    color: #858585;
    padding-left: 5px;
    white-space: nowrap;
    border-left: 1px solid #111;
`;

const FileHeadName = styled(FileHeadCell).attrs({ $w: 102 })`
    display: flex;
    align-items: center;
    justify-content: space-between;
    padding-right: 3px;
`;

const SortArrow = styled.span`
    width: 0;
    height: 0;
    border-left: 6px solid transparent;
    border-right: 6px solid transparent;
    border-bottom: 5px solid #2d8ceb;
`;

const FileHeadTag = styled.div`
    width: 21px;
    flex: none;
    display: flex;
    justify-content: center;
    border-left: 1px solid #111;
`;

const FileArea = styled.div`
    flex: 1;
    display: flex;
`;

const FileList = styled.div`
    width: 302px;
    display: flex;
    flex-direction: column;
`;

const FileRow = styled.div<{ $selected: boolean }>`
    height: 19px;
    flex: none;
    display: grid;
    grid-template-columns: 34px 84px 28px 77px 43px 32px;
    align-items: center;
    background: ${(p) => (p.$selected ? "#333" : "#2a2a2a")};
    border-bottom: 1px solid #1f1f1f;
`;

const FileIconCell = styled.div`
    display: flex;
    justify-content: center;
    padding-left: 15px;
    position: relative;
`;

const ExpandMark = styled.span`
    position: absolute;
    left: 2px;
    top: 2px;
    display: flex;
`;

const FileName = styled.div<{ $selected: boolean }>`
    font-size: 10.5px;
    white-space: nowrap;
    height: 18px;
    line-height: 18px;
    padding-left: 2px;
    color: ${(p) => (p.$selected ? "#1c1c1c" : "#8f8f8f")};
    background: ${(p) => (p.$selected ? "#9d9d9d" : "transparent")};
    font-weight: ${(p) => (p.$selected ? 700 : 400)};
`;

const FileSwatchCell = styled.div`
    display: flex;
    padding-left: 6px;
`;

const Swatch9 = styled.div<{ $color: string; $selected: boolean }>`
    width: 9px;
    height: 9px;
    background: ${(p) => p.$color};
    outline: ${(p) => (p.$selected ? "1px solid #111" : "none")};
`;

const FileText = styled.div`
    font-size: 10.5px;
    color: #8f8f8f;
    white-space: nowrap;
`;

const FileFps = styled(FileText)`
    text-align: right;
`;

const FileSide = styled.div`
    flex: 1;
    display: flex;
    justify-content: center;
    padding-top: 2px;
`;

const ProjectFooter = styled.div`
    height: 19px;
    margin: auto 0 1px;
    flex: none;
    display: flex;
    align-items: center;
    border-top: 1px solid #111;
    padding-left: 1px;
`;

const FooterIcon = styled.div<{ $w: number }>`
    width: ${(p) => p.$w}px;
    flex: none;
    display: flex;
    justify-content: center;
`;

const BpcBox = styled.div`
    width: 46px;
    height: 16px;
    flex: none;
    font-size: 9px;
    color: #8f8f8f;
    text-align: center;
    line-height: 16px;
    background: #222;
    border-radius: 2px;
`;

const FooterPill = styled.div`
    width: 41px;
    height: 15px;
    margin-left: 3px;
    border-radius: 8px;
    background: #3a3a3a;
`;

const Comp = styled(Panel)`
    width: 864px;
    flex: none;
`;

const CompTabRow = styled.div`
    height: 27px;
    flex: none;
    display: flex;
    align-items: center;
    padding-left: 10px;
`;

const TabClose = styled.span`
    font-size: 10px;
    color: #8a8a8a;
    width: 16px;
    flex: none;
`;

const TabSwatch = styled.div`
    width: 10px;
    height: 10px;
    background: ${TAN};
    flex: none;
`;

const LockMark = styled.span`
    margin-left: 10px;
    display: flex;
`;

const CompTabTitle = styled.span`
    font-size: 10.5px;
    color: #d4d4d4;
    margin: 0 8px;
`;

const BlueText = styled.span`
    color: #2f9be6;
`;

const FlowRow = styled.div`
    height: 26px;
    flex: none;
    display: flex;
    align-items: center;
    padding-left: 19px;
`;

const FlowActive = styled.div`
    width: 70px;
    height: 18px;
    background: #1c1c1c;
    border-radius: 2px;
    font-size: 10.5px;
    display: flex;
    align-items: center;
    justify-content: space-between;
    padding: 0 3px 0 9px;
`;

const FlowName = styled.span`
    font-size: 10.5px;
    color: #8f8f8f;
    margin-left: 9px;
`;

const ViewerSvg = styled.svg`
    display: block;
    flex: none;
`;

const RulerDigits = styled.text`
    font-family: ${FONT};
    font-size: 9px;
    fill: #9d9d9d;
    writing-mode: vertical-rl;
    text-orientation: upright;
    letter-spacing: -3.3px;
`;

const ArtText = styled.text`
    font-family: Inter, "Liberation Sans", sans-serif;
    font-weight: 300;
    fill: #0a0a0a;
`;

const ViewerBar = styled.div`
    height: 29px;
    flex: none;
    display: flex;
    align-items: center;
    padding: 5px 0 0 5px;
`;

const ViewerSelect = styled.div<{ $w: number }>`
    width: ${(p) => p.$w}px;
    height: 19px;
    flex: none;
    background: #1f1f1f;
    border-radius: 2px;
    font-size: 11px;
    color: #bcbcbc;
    display: flex;
    align-items: center;
    justify-content: space-between;
    padding: 0 3px 0 7px;
`;

const BarSep = styled.div`
    width: 12px;
    height: 14px;
    flex: none;
    display: flex;
    justify-content: center;
    &::before {
        content: "";
        width: 1px;
        background: #383838;
    }
`;

const NarrowSep = styled(BarSep)`
    width: 10px;
`;

const ViewerBtn = styled.div<{ $active?: boolean }>`
    width: 22px;
    height: 19px;
    flex: none;
    display: flex;
    align-items: center;
    justify-content: center;
    border-radius: 2px;
    background: ${(p) => (p.$active ? "#1a1a1a" : "transparent")};
`;

const Exposure = styled.span`
    font-size: 10.5px;
    color: #2f9be6;
    width: 32px;
    flex: none;
    padding-left: 2px;
`;

const TimeBox = styled.div`
    width: 70px;
    height: 19px;
    flex: none;
    margin-left: 1px;
    background: #1f1f1f;
    border-radius: 2px;
    font-size: 10.5px;
    color: #9d9d9d;
    text-align: center;
    line-height: 19px;
`;

const Side = styled(Panel)`
    flex: 1;
    flex-direction: row;
`;

const SideList = styled.div`
    width: 205px;
    flex: none;
    display: flex;
    flex-direction: column;
`;

const SideStrip = styled.div`
    flex: 1;
    background: #212121;
`;

const SideItem = styled.div`
    height: 30px;
    flex: none;
    font-size: 10.5px;
    color: #a2a2a2;
    line-height: 28px;
    padding-left: 12px;
    border-bottom: 2px solid #181818;
`;

const AlignBlock = styled.div`
    height: 129px;
    flex: none;
    display: flex;
    flex-direction: column;
    padding: 0 1px 0 6px;
    border-bottom: 2px solid #181818;
`;

const AlignHead = styled.div`
    height: 28px;
    flex: none;
    display: flex;
    align-items: center;
    justify-content: space-between;
    padding: 0 9px 0 6px;
`;

const AlignTitle = styled.span`
    font-size: 11px;
    color: #dcdcdc;
`;

const AlignToRow = styled.div`
    height: 24px;
    flex: none;
    display: flex;
    align-items: center;
    justify-content: space-between;
`;

const AlignLabel = styled.span`
    font-size: 10.5px;
    color: #a2a2a2;
`;

const AlignSelect = styled.div`
    width: 111px;
    height: 18px;
    background: #2c2c2c;
    border-radius: 2px;
    font-size: 10.5px;
    color: #575757;
    display: flex;
    align-items: center;
    justify-content: space-between;
    padding: 0 4px 0 7px;
`;

const AlignIcons = styled.div<{ $h: number }>`
    height: ${(p) => p.$h}px;
    flex: none;
    display: flex;
    align-items: center;
    justify-content: space-between;
    padding: 0 6px 0 5px;
`;

const AlignDivider = styled.div`
    height: 2px;
    flex: none;
    background: #2e2e2e;
    margin: 3px 4px 0 0;
`;

const DistLabel = styled.div`
    font-size: 10.5px;
    color: #a2a2a2;
    height: 19px;
    line-height: 19px;
    flex: none;
`;

const Timeline = styled.div`
    height: 364px;
    flex: none;
    margin-top: 3px;
    background: #262626;
    border: 1px solid #2d8ceb;
    border-radius: 0 0 9px 9px;
    display: flex;
    flex-direction: column;
`;

const TimelineTabs = styled.div`
    height: 26px;
    flex: none;
    display: flex;
    align-items: flex-end;
    padding-left: 11px;
`;

const ActiveTab = styled.div`
    width: 92px;
    height: 25px;
    display: flex;
    align-items: center;
    border-bottom: 2px solid #cfcfcf;
`;

const TimelineClose = styled(TabClose)`
    width: 15px;
`;

const TimelineTabName = styled.span`
    font-size: 10.5px;
    color: #c4c4c4;
    margin: 0 9px 0 11px;
    white-space: nowrap;
`;

const IdleTab = styled.div`
    height: 25px;
    display: flex;
    align-items: center;
    margin-left: 36px;
`;

const TimelineIdleName = styled.span`
    font-size: 10.5px;
    color: #8f8f8f;
    margin-left: 11px;
`;

const TimelineBody = styled.div`
    flex: 1;
    min-height: 0;
    display: flex;
`;

const LayerColumn = styled.div`
    width: 699px;
    flex: none;
    display: flex;
    flex-direction: column;
`;

const TimeRow = styled.div`
    height: 37px;
    flex: none;
    display: flex;
    align-items: center;
    border-bottom: 1px solid #0e0e0e;
`;

const TimeBlock = styled.div`
    width: 101px;
    flex: none;
    padding: 2px 0 0 13px;
    display: flex;
    flex-direction: column;
    line-height: 14px;
`;

const CurrentTime = styled.div`
    font-size: 15px;
    font-weight: 700;
    color: #2f9be6;
`;

const FrameCount = styled.div`
    font-size: 9.6px;
    color: #1c6eb4;
    white-space: nowrap;
`;

const TimeSearch = styled.div`
    width: 430px;
    height: 18px;
    flex: none;
    background: #171717;
    border-radius: 2px;
    display: flex;
    align-items: center;
    padding-left: 7px;
`;

const TimeTools = styled.div`
    display: flex;
    align-items: center;
`;

const TimeTool = styled.div<{ $w: number }>`
    width: ${(p) => p.$w}px;
    flex: none;
    display: flex;
    justify-content: center;
`;

const ColumnHeader = styled.div`
    height: 19px;
    flex: none;
    display: flex;
    align-items: center;
    background: #333;
    border-bottom: 1px solid #0e0e0e;
    font-size: 8.5px;
    color: #7f7f7f;
`;

const HeadIcons = styled.div`
    width: 69px;
    flex: none;
    display: grid;
    grid-template-columns: repeat(4, 15.3px);
    justify-items: center;
    align-items: center;
    padding-left: 4px;
`;

const HeadCell = styled.div`
    flex: none;
    height: 13px;
    line-height: 13px;
    border-left: 1px solid #111;
    padding-left: 5px;
    white-space: nowrap;
`;

const HeadTag = styled(HeadCell)`
    width: 32px;
    display: flex;
    align-items: center;
    padding-left: 13px;
`;

const HeadNum = styled(HeadCell)`
    width: 32px;
`;

const HeadLayerName = styled(HeadCell)`
    width: 130px;
`;

const HeadSwitches = styled(HeadCell)`
    width: 137px;
    display: grid;
    grid-template-columns: repeat(8, 15px);
    justify-items: center;
    align-items: center;
    padding-left: 3px;
    & svg {
        max-width: 13px;
        max-height: 12px;
    }
`;

const FxMark = styled.span`
    font-family: "Liberation Serif", serif;
    font-style: italic;
    font-size: 12px;
    color: #c0c0c0;
`;

const HeadMode = styled(HeadCell)`
    width: 84px;
`;

const HeadT = styled.div`
    width: 15px;
    flex: none;
`;

const HeadTrk = styled.div`
    width: 67px;
    flex: none;
`;

const HeadParent = styled(HeadCell)`
    width: 118px;
    border-right: 1px solid #111;
`;

const LayerList = styled.div`
    flex: 1;
    background: #262626;
`;

const LayerRow = styled.div`
    height: 17px;
    display: flex;
    align-items: center;
    background: #2c2c2c;
    border-bottom: 1px solid #202020;
`;

const Cell = styled.div`
    width: 13px;
    height: 13px;
    flex: none;
    background: #202020;
    display: flex;
    align-items: center;
    justify-content: center;
`;

const EyeBox = styled(Cell)`
    margin-left: 5px;
`;

const AudioGroup = styled.div`
    display: flex;
    gap: 2px;
    margin-left: 17px;
    flex: none;
`;

const TwirlCell = styled.div`
    width: 12px;
    margin-left: 7px;
    flex: none;
    display: flex;
    justify-content: center;
`;

const LayerSwatch = styled.div<{ $color: string }>`
    width: 12px;
    height: 12px;
    margin-left: 4px;
    flex: none;
    background: ${(p) => p.$color};
`;

const LayerNum = styled.div`
    width: 28px;
    margin-left: 9px;
    flex: none;
    font-size: 10.5px;
    font-weight: 700;
    color: #8c8c8c;
`;

const LayerIconCell = styled.div`
    width: 16px;
    flex: none;
    display: flex;
    justify-content: center;
`;

const SolidChip = styled.div`
    width: 14px;
    height: 14px;
    background: #fff;
    border: 1px solid #000;
`;

const LayerName = styled.div`
    width: 113px;
    margin-left: 4px;
    flex: none;
    font-size: 10.5px;
    font-weight: 700;
    color: #8c8c8c;
    white-space: nowrap;
`;

const SwitchGroup = styled.div`
    display: flex;
    gap: 2px;
    flex: none;
`;

const ExtraGroup = styled(SwitchGroup)`
    margin-left: 32px;
`;

const SelectBase = styled.div`
    height: 14px;
    flex: none;
    background: #1d1d1d;
    font-size: 10.5px;
    color: #b5b5b5;
    display: flex;
    align-items: center;
    justify-content: space-between;
    padding: 0 3px 0 6px;
`;

const ModeSelect = styled(SelectBase)`
    width: 69px;
    margin-left: 18px;
`;

const PreserveCell = styled(Cell)`
    margin-left: 5px;
`;

const MatteSelect = styled(SelectBase)`
    width: 65px;
    margin-left: 6px;
`;

const MatteEmpty = styled.div`
    width: 65px;
    margin-left: 6px;
    flex: none;
`;

const SpiralCell = styled.div`
    width: 16px;
    margin-left: 7px;
    flex: none;
    display: flex;
    justify-content: center;
`;

const ParentSelect = styled(SelectBase)`
    width: 89px;
    margin-left: 5px;
`;

const TrackColumn = styled.div`
    flex: 1;
    min-width: 0;
    display: flex;
    flex-direction: column;
    position: relative;
    border-left: 1px solid #000;
`;

const TimeRuler = styled.div`
    height: 37px;
    flex: none;
    position: relative;
    border-bottom: 1px solid #0e0e0e;
`;

const NavBar = styled.div`
    display: flex;
    height: 10px;
    margin: 6px 17px 0 1px;
    background: #1e1e1e;
    align-items: center;
`;

const NavStart = styled.div`
    width: 6px;
    height: 10px;
    background: #2d8ceb;
    border-radius: 5px 0 0 5px;
`;

const NavRange = styled.div`
    width: 253px;
    height: 8px;
    background: #616161;
`;

const NavEnd = styled.div`
    width: 6px;
    height: 10px;
    background: #2d8ceb;
    border-radius: 0 5px 5px 0;
`;

const NavRest = styled.div`
    width: 195px;
    height: 9px;
    background: #3d3830;
`;

const TimeMark = styled.div`
    position: absolute;
    top: 16px;
    width: 0;
    display: flex;
    flex-direction: column;
    align-items: center;
    font-size: 10px;
    color: #a8a8a8;
    white-space: nowrap;
    line-height: 14px;
`;

const TimeLabel = styled.span<{ $first: boolean }>`
    transform: translateX(${(p) => (p.$first ? 4 : 0)}px);
`;

const TimeTick = styled.div`
    width: 1px;
    height: 5px;
    background: #8f8f8f;
`;

const TrackMain = styled.div`
    flex: 1;
    min-height: 0;
    display: flex;
`;

const TrackGutter = styled.div`
    width: 7px;
    flex: none;
    background: #2a2a2a;
`;

const WorkHandle = styled.div`
    width: 7px;
    height: 15px;
    background: #2d8ceb;
    border-radius: 6px 0 0 6px;
`;

const TrackStack = styled.div`
    width: 686px;
    flex: none;
    display: flex;
    flex-direction: column;
    background: #343434;
`;

const WorkBar = styled.div`
    height: 19px;
    flex: none;
    background: #616161;
    border-bottom: 4px solid #141414;
`;

const Tracks = styled.div`
    flex: 1;
    display: flex;
    flex-direction: column;
`;

const TrackBar = styled.div<{ $kind: string }>`
    height: 17px;
    flex: none;
    position: relative;
    background: ${(p) => (p.$kind === "solid" ? "#763a3b" : p.$kind === "comp" ? "#3a3a3a" : "#525e8e")};
    border-bottom: 1px solid #2b2b2f;
`;

const CompBar = styled.div`
    height: 16px;
    width: 608px;
    background: #6f6856;
`;

const CompCorner = styled.div`
    position: absolute;
    left: 0;
    top: 1px;
    border-style: solid;
    border-width: 5px 5px 0 0;
    border-color: #2b2b2b transparent transparent transparent;
`;

const Hatch = styled.div`
    position: absolute;
    left: 0;
    bottom: 0;
    width: 236px;
    height: 3px;
    background: repeating-linear-gradient(45deg, #8a8fa8 0 1px, #525e8e 1px 3px);
    &::after {
        content: "";
        position: absolute;
        right: 0;
        bottom: 0;
        width: 1px;
        height: 6px;
        background: #9da0b5;
    }
`;

const TrackStrip = styled.div`
    flex: 1;
    display: flex;
    flex-direction: column;
    align-items: center;
    padding-top: 1px;
    gap: 4px;
`;

const WorkMarker = styled.div`
    width: 12px;
    height: 14px;
    background: #a8a8a8;
    clip-path: polygon(0 0, 100% 0, 100% 65%, 50% 100%, 0 65%);
`;

const PlayHead = styled.div`
    position: absolute;
    top: 21px;
    bottom: 0;
    width: 0;
    display: flex;
    flex-direction: column;
    align-items: center;
`;

const PlayCap = styled.div`
    width: 11px;
    height: 13px;
    flex: none;
    background: #2d8ceb;
    clip-path: polygon(0 0, 100% 0, 100% 60%, 50% 100%, 0 60%);
`;

const PlayLine = styled.div`
    width: 1px;
    flex: 1;
    background: #2d8ceb;
`;

const TimelineFooter = styled.div`
    height: 17px;
    flex: none;
    display: flex;
    align-items: center;
    background: #232323;
    border-top: 1px solid #0e0e0e;
    border-radius: 0 0 8px 8px;
    overflow: hidden;
`;

const FootLeft = styled.div`
    width: 699px;
    flex: none;
    display: flex;
    align-items: center;
    padding-left: 3px;
    height: 100%;
`;

const FootIcon = styled.div`
    width: 18px;
    height: 100%;
    flex: none;
    display: flex;
    align-items: center;
    justify-content: center;
    border-right: 1px solid #2e2e2e;
`;

const ZoomControls = styled.div`
    width: 109px;
    height: 100%;
    flex: none;
    display: flex;
    align-items: center;
    padding-left: 6px;
    gap: 11px;
`;

const ZoomSlider = styled.div`
    width: 43px;
    height: 2px;
    flex: none;
    margin-left: 5px;
    background: #4a4a4a;
    position: relative;
`;

const ZoomKnob = styled.div`
    position: absolute;
    left: 23px;
    top: -4px;
    width: 9px;
    height: 9px;
    border-radius: 50%;
    background: #232323;
    border: 1.5px solid #a8a8a8;
`;

const FootPill = styled.div`
    width: 217px;
    height: 15px;
    border-radius: 8px;
    background: #343434;
`;

export default App;
